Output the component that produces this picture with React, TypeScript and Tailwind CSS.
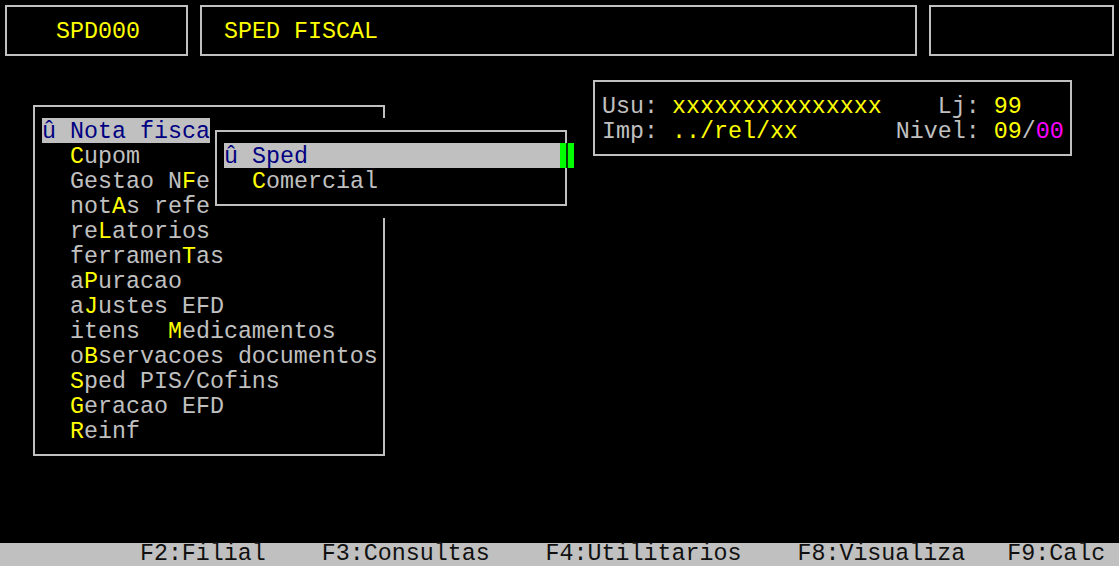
import React from "react";

// terminal grid: 80 cols x 14px, rows of 25px
const menu = [
  { pre: "", hot: "C", post: "upom" },
  { pre: "Gestao N", hot: "F", post: "e" },
  { pre: "not", hot: "A", post: "s refe" },
  { pre: "re", hot: "L", post: "atorios" },
  { pre: "ferramen", hot: "T", post: "as" },
  { pre: "a", hot: "P", post: "uracao" },
  { pre: "a", hot: "J", post: "ustes EFD" },
  { pre: "itens  ", hot: "M", post: "edicamentos" },
  { pre: "o", hot: "B", post: "servacoes documentos" },
  { pre: "", hot: "S", post: "ped PIS/Cofins" },
  { pre: "", hot: "G", post: "eracao EFD" },
  { pre: "", hot: "R", post: "einf" },
];

function Row({ pre, hot, post }: { pre: string; hot: string; post: string }) {
  return (
    <div className="h-[25px] whitespace-pre leading-[28px]">
      {"  " + pre}
      <span className="text-[#ffff00]">{hot}</span>
      {post}
    </div>
  );
}

export default function App() {
  return (
    <div className="relative flex h-[566px] w-[1119px] flex-col overflow-hidden bg-black font-['Liberation_Mono',monospace] text-[23.32px] leading-[25px] text-[#c0c0c0]">
      {/* header boxes */}
      <div className="flex gap-[12px] px-[5px] pt-[5px]">
        <div className="flex h-[51px] w-[183px] items-center border-2 border-[#c0c0c0] pl-[49px] pt-[3px] text-[#ffff00]">
          SPD000
        </div>
        <div className="flex h-[51px] w-[717px] items-center border-2 border-[#c0c0c0] pl-[22px] pt-[3px] text-[#ffff00]">
          SPED FISCAL
        </div>
        <div className="h-[51px] w-[185px] border-2 border-[#c0c0c0]" />
      </div>

      {/* main menu window */}
      <div className="absolute left-[33px] top-[105px] h-[351px] w-[352px] border-2 border-[#c0c0c0] pl-[7px] pr-[5px] pt-[11px]">
        <div className="h-[25px] whitespace-pre bg-[#c0c0c0] leading-[28px] text-[#000080]">û Nota fiscal</div>
        {menu.map((m) => (
          <Row key={m.pre + m.hot + m.post} {...m} />
        ))}
      </div>

      {/* submenu window: its cells blank out what lies beneath */}
      <div className="absolute left-[210px] top-[118px] h-[100px] w-[364px] bg-black pl-[5px] pt-[12px]">
        <div className="h-[76px] w-[352px] border-2 border-[#c0c0c0] pl-[7px] pt-[11px]">
          <div className="relative h-[25px] w-[336px] whitespace-pre bg-[#c0c0c0] leading-[28px] text-[#000080]">
            û Sped
            <div className="absolute left-[336px] top-0 flex h-[25px] w-[14px] justify-center bg-[#00ff00]">
              <div className="h-full w-[2px] bg-[#0a3a0a]" />
            </div>
          </div>
          <div className="h-[25px] whitespace-pre leading-[28px]">
            {"  "}
            <span className="text-[#ffff00]">C</span>omercial
          </div>
        </div>
      </div>

      {/* user info window */}
      <div className="absolute left-[593px] top-[80px] h-[76px] w-[479px] border-2 border-[#c0c0c0] pl-[7px] pt-[11px]">
        <div className="h-[25px] whitespace-pre leading-[28px]">
          {"Usu: "}
          <span className="text-[#ffff00]">xxxxxxxxxxxxxxx</span>
          {"    Lj: "}
          <span className="text-[#ffff00]">99</span>
        </div>
        <div className="h-[25px] whitespace-pre leading-[28px]">
          {"Imp: "}
          <span className="text-[#ffff00]">../rel/xx</span>
          {"       Nivel: "}
          <span className="text-[#ffff00]">09</span>/<span className="text-[#ff00ff]">00</span>
        </div>
      </div>

      {/* status bar */}
      <div className="mt-auto h-[23px] whitespace-pre bg-[#c0c0c0] leading-[23px] text-[#101010]">
        {"          F2:Filial    F3:Consultas    F4:Utilitarios    F8:Visualiza   F9:Calc"}
      </div>
    </div>
  );
}
